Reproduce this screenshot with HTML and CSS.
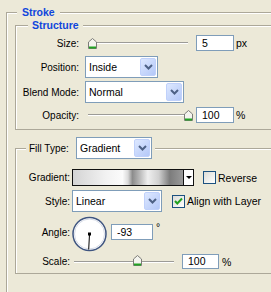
FILE: index.html
```html
<!DOCTYPE html>
<html lang="en">
<head>
  <meta charset="UTF-8">
  <title>Layer Style - Stroke</title>
  <link rel="stylesheet" href="styles.css">
</head>
<body>

  <fieldset class="group outer">
    <legend class="title">Stroke</legend>

    <!-- Structure -->
    <fieldset class="group structure">
      <legend class="title">Structure</legend>

      <div class="row row-size">
        <span class="lbl">Size:</span>
        <div class="slider">
          <span class="track"></span>
          <svg class="thumb" style="left: 3px" width="9" height="11" viewBox="0 0 9 11">
            <path d="M0.5 10.5V4L4.5 0.5L8.5 4V10.5Z" fill="#f4f4ee" stroke="#7c7c78"/>
            <path d="M1 9.5H8" stroke="#22a322" stroke-width="2"/>
          </svg>
        </div>
        <span class="num">5</span>
        <span class="unit">px</span>
      </div>

      <div class="row row-pos">
        <span class="lbl">Position:</span>
        <div class="select sel-pos">
          <span>Inside</span>
          <span class="select-btn"><svg width="9" height="6" viewBox="0 0 9 6"><path d="M1 1L4.5 4.5L8 1" fill="none" stroke="#4d6185" stroke-width="2"/></svg></span>
        </div>
      </div>

      <div class="row row-blend">
        <span class="lbl">Blend Mode:</span>
        <div class="select sel-blend">
          <span>Normal</span>
          <span class="select-btn"><svg width="9" height="6" viewBox="0 0 9 6"><path d="M1 1L4.5 4.5L8 1" fill="none" stroke="#4d6185" stroke-width="2"/></svg></span>
        </div>
      </div>

      <div class="row row-opacity">
        <span class="lbl">Opacity:</span>
        <div class="slider">
          <span class="track"></span>
          <svg class="thumb" style="left: 99px" width="9" height="11" viewBox="0 0 9 11">
            <path d="M0.5 10.5V4L4.5 0.5L8.5 4V10.5Z" fill="#f4f4ee" stroke="#7c7c78"/>
            <path d="M1 9.5H8" stroke="#22a322" stroke-width="2"/>
          </svg>
        </div>
        <span class="num">100</span>
        <span class="unit">%</span>
      </div>
    </fieldset>

    <!-- Fill -->
    <fieldset class="group fill">
      <legend class="fill-legend">
        <div class="legend-row">
          <span class="legend-lbl">Fill Type:</span>
          <div class="select sel-fill">
            <span>Gradient</span>
            <span class="select-btn"><svg width="9" height="6" viewBox="0 0 9 6"><path d="M1 1L4.5 4.5L8 1" fill="none" stroke="#4d6185" stroke-width="2"/></svg></span>
          </div>
        </div>
      </legend>

      <div class="row row-grad">
        <span class="lbl">Gradient:</span>
        <div class="grad">
          <span class="grad-fill"></span>
          <span class="grad-arrow"></span>
        </div>
        <span class="check check-rev"></span>
        <span class="check-lbl">Reverse</span>
      </div>

      <div class="row row-style">
        <span class="lbl">Style:</span>
        <div class="select sel-style">
          <span>Linear</span>
          <span class="select-btn"><svg width="9" height="6" viewBox="0 0 9 6"><path d="M1 1L4.5 4.5L8 1" fill="none" stroke="#4d6185" stroke-width="2"/></svg></span>
        </div>
        <span class="check check-align">
          <svg width="11" height="11" viewBox="0 0 11 11"><path d="M2 5L4.3 7.5L9 2.5" fill="none" stroke="#21a121" stroke-width="2"/></svg>
        </span>
        <span class="check-lbl">Align with Layer</span>
      </div>

      <div class="row row-angle">
        <span class="lbl">Angle:</span>
        <svg class="dial" width="37" height="36" viewBox="0 0 37 36">
          <circle cx="18.5" cy="18" r="16.5" fill="#fff" stroke="#3f5580" stroke-width="1.5"/>
          <circle cx="18.5" cy="18" r="15" fill="none" stroke="#d6dbe6" stroke-width="1"/>
          <path d="M18.5 18L17.7 33.5" stroke="#000" stroke-width="1"/>
          <rect x="17" y="16.5" width="3" height="3" fill="#000"/>
        </svg>
        <span class="num num-angle">-93</span>
        <span class="deg">°</span>
      </div>

      <div class="row row-scale">
        <span class="lbl">Scale:</span>
        <div class="slider slider-scale">
          <span class="track"></span>
          <svg class="thumb" style="left: 61px" width="9" height="11" viewBox="0 0 9 11">
            <path d="M0.5 10.5V4L4.5 0.5L8.5 4V10.5Z" fill="#f4f4ee" stroke="#7c7c78"/>
            <path d="M1 9.5H8" stroke="#22a322" stroke-width="2"/>
          </svg>
        </div>
        <span class="num num-scale">100</span>
        <span class="unit unit-scale">%</span>
      </div>
    </fieldset>
  </fieldset>

</body>
</html>
```

FILE: styles.css
```css
body {
  margin: 0;
  background: #ece9d8;
  font-family: 'Liberation Sans', Arial, sans-serif;
  font-size: 10px;
  color: #000;
  overflow: hidden;
}

/* Group boxes */
.group {
  margin: 0;
  min-width: 0;
  border: 1px solid #aca899;
  border-right: 0;
  box-shadow: inset 1px 1px 0 #fff;
}

.outer {
  margin: 6px 0 0 6px;
  padding: 0 0 18px 8px;
  border-bottom: 0;
}

.title {
  font-size: 10.5px;
  font-weight: bold;
  line-height: 13px;
  color: #0f46dc;
  background: #ece9d8;
  padding: 0 5px;
  margin-left: 2px;
}

.structure {
  padding: 3px 0 6px 0;
}

.structure > .title {
  margin-left: 12px;
  padding: 0 4px;
}

.fill {
  margin-top: 7px;
  padding: 10px 0 4px 0;
}

.fill-legend {
  margin-left: 10px;
  padding: 0 3px;
  background: #ece9d8;
}

.legend-row {
  display: flex;
  align-items: center;
}

.legend-lbl {
  width: 47px;
}

/* Rows */
.row {
  display: flex;
  align-items: center;
}

.lbl {
  flex: none;
  text-align: right;
}

.structure .lbl {
  width: 63px;
  margin-right: 6px;
}

.fill .lbl {
  width: 54px;
  margin-right: 2px;
}

.row-size { height: 16px; }
.row-pos { margin-top: 5px; height: 22px; }
.row-blend { margin-top: 3px; height: 22px; }
.row-opacity { margin-top: 4px; height: 16px; }

.row-grad { height: 17px; }
.row-style { margin-top: 4px; height: 22px; }
.row-angle { margin-top: 4px; height: 36px; align-items: flex-start; }
.row-scale { margin-top: 2px; height: 15px; }

/* Sliders */
.slider {
  position: relative;
  width: 108px;
  height: 100%;
  display: flex;
  align-items: center;
}

.slider-scale {
  width: 107px;
}

.track {
  display: block;
  width: 100px;
  height: 1px;
  margin-left: 3px;
  background: #9c9b97;
  border-bottom: 1px solid #fff;
}

.slider-scale .track {
  margin-left: 2px;
}

.thumb {
  position: absolute;
  top: 3px;
}

.slider-scale .thumb {
  top: 1px;
}

/* Number boxes */
.num {
  box-sizing: border-box;
  width: 38px;
  height: 16px;
  margin-left: 3px;
  padding-left: 5px;
  line-height: 14px;
  font-size: 10.5px;
  background: #fff;
  border: 1px solid #7f9db9;
}

.num-angle {
  width: 42px;
  margin: 8px 0 0 3px;
}

.num-scale {
  width: 37px;
  height: 15px;
  line-height: 13px;
}

.unit {
  margin-left: 2px;
  font-size: 10.5px;
}

.unit-scale {
  margin-left: 3px;
}

.deg {
  margin: 5px 0 0 3px;
  font-size: 10.5px;
}

/* Combo boxes */
.select {
  box-sizing: border-box;
  height: 22px;
  display: flex;
  align-items: center;
  justify-content: space-between;
  padding: 1px 1px 1px 3px;
  font-size: 10.5px;
  background: #fff;
  border: 1px solid #7f9db9;
}

.sel-pos { width: 73px; }
.sel-blend { width: 99px; }
.sel-fill { width: 76px; margin-left: 0; }
.sel-style { width: 90px; }

.select-btn {
  box-sizing: border-box;
  width: 16px;
  height: 18px;
  display: flex;
  align-items: center;
  justify-content: center;
  border: 1px solid #c0d1fb;
  border-radius: 2px;
  background: linear-gradient(135deg, #dde8ff, #b4c8f8);
}

/* Gradient picker */
.grad {
  box-sizing: border-box;
  width: 122px;
  height: 17px;
  display: flex;
  border: 1px solid #111;
}

.grad-fill {
  flex: 1;
  background: linear-gradient(to right, #d4d4d4 0%, #f2f2f2 30%, #fbfbfb 45%, #dadada 50%, #8c8c8c 54%, #b4b4b4 60%, #efefef 68%, #d0d0d0 78%, #7c7c7c 88%, #9a9a9a 100%);
}

.grad-arrow {
  width: 9px;
  display: flex;
  align-items: center;
  justify-content: center;
  background: #fff;
  border-left: 1px solid #111;
}

.grad-arrow::after {
  content: '';
  border-left: 3px solid transparent;
  border-right: 3px solid transparent;
  border-top: 3px solid #000;
}

/* Checkboxes */
.check {
  box-sizing: border-box;
  flex: none;
  width: 13px;
  height: 13px;
  display: flex;
  align-items: center;
  justify-content: center;
  border: 1px solid #1c5180;
  background: linear-gradient(135deg, #dcdcd7, #fff);
}

.check-rev {
  margin-left: 9px;
}

.check-align {
  margin-left: 10px;
}

.check-lbl {
  margin-left: 2px;
  font-size: 10.5px;
}

/* Angle dial */
.dial {
  margin-left: -1px;
}

.row-angle .lbl {
  margin-top: 11px;
}
```
